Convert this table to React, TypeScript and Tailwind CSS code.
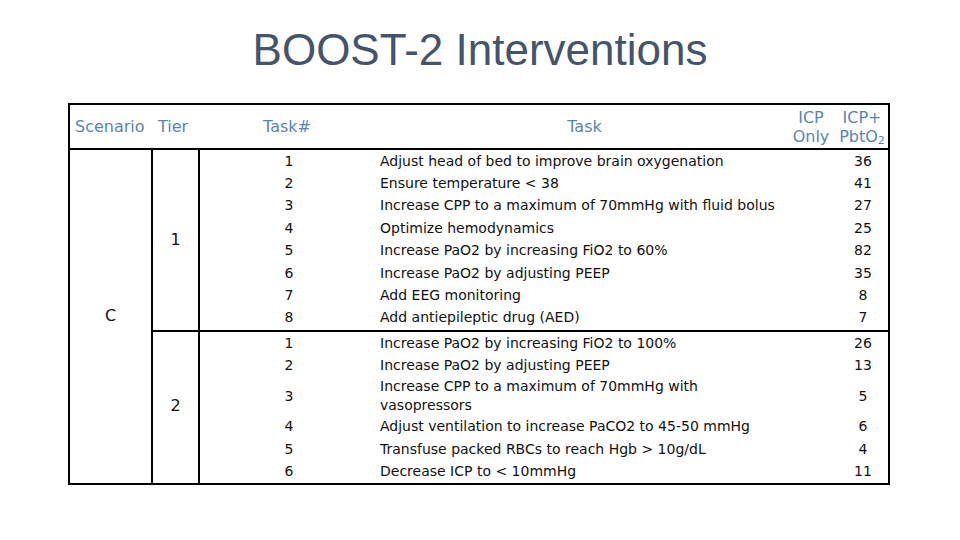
import React from 'react'

type Row = { n: string; task: React.ReactNode; count: string; tall?: boolean }

const tier1: Row[] = [
    { n: '1', task: 'Adjust head of bed to improve brain oxygenation', count: '36' },
    { n: '2', task: 'Ensure temperature < 38', count: '41' },
    { n: '3', task: 'Increase CPP to a maximum of 70mmHg with fluid bolus', count: '27' },
    { n: '4', task: 'Optimize hemodynamics', count: '25' },
    { n: '5', task: 'Increase PaO2 by increasing FiO2 to 60%', count: '82' },
    { n: '6', task: 'Increase PaO2 by adjusting PEEP', count: '35' },
    { n: '7', task: 'Add EEG monitoring', count: '8' },
    { n: '8', task: 'Add antiepileptic drug (AED)', count: '7' },
]

const tier2: Row[] = [
    { n: '1', task: 'Increase PaO2 by increasing FiO2 to 100%', count: '26' },
    { n: '2', task: 'Increase PaO2 by adjusting PEEP', count: '13' },
    {
        n: '3',
        task: (
            <>
                Increase CPP to a maximum of 70mmHg with
                <br />
                vasopressors
            </>
        ),
        count: '5',
        tall: true,
    },
    { n: '4', task: 'Adjust ventilation to increase PaCO2 to 45-50 mmHg', count: '6' },
    { n: '5', task: 'Transfuse packed RBCs to reach Hgb > 10g/dL', count: '4' },
    { n: '6', task: 'Decrease ICP to < 10mmHg', count: '11' },
]

function TaskRow({ row, h }: { row: Row; h: string }) {
    return (
        <div className={`flex items-center leading-[19px] ${h}`}>
            <div className="w-[178px] text-center">{row.n}</div>
            <div className="w-[460px] pl-[2px]">{row.task}</div>
            <div className="flex-1 text-center">{row.count}</div>
        </div>
    )
}

export default function App() {
    return (
        <div className="w-[960px] h-[540px] bg-white overflow-hidden">
            <h1 className="text-center text-[44px] leading-none text-[#44546a] pt-[28px] font-['Liberation_Sans',Arial,sans-serif]">
                BOOST-2 Interventions
            </h1>

            <div className="ml-[68px] mt-[31px] w-[822px] border-2 border-black text-[14px] text-[#111] font-['DejaVu_Sans',Tahoma,sans-serif]">
                {/* header */}
                <div className="flex items-center h-[45px] border-b-2 border-black text-[16px] text-[#5b84b1]">
                    <div className="pl-[5px] w-[88px]">Scenario</div>
                    <div className="w-[105px]">Tier</div>
                    <div className="w-[120px]">Task#</div>
                    <div className="w-[403px] text-center">Task</div>
                    <div className="w-[50px] text-center leading-[19px]">
                        ICP
                        <br />
                        Only
                    </div>
                    <div className="flex-1 text-center leading-[19px]">
                        ICP+
                        <br />
                        PbtO<sub className="text-[11px]">2</sub>
                    </div>
                </div>

                {/* body */}
                <div className="flex">
                    <div className="w-[83px] border-r-2 border-black flex items-center justify-center text-[16px]">C</div>
                    <div className="flex-1 flex flex-col">
                        <div className="flex h-[180px]">
                            <div className="w-[47px] border-r-2 border-black flex items-center justify-center text-[16px]">1</div>
                            <div className="flex-1 flex flex-col">
                                {tier1.map(r => (
                                    <TaskRow key={r.n} row={r} h="h-[22.4px]" />
                                ))}
                            </div>
                        </div>
                        <div className="flex border-t-2 border-black">
                            <div className="w-[47px] border-r-2 border-black flex items-center justify-center text-[16px] pb-[2px]">2</div>
                            <div className="flex-1 flex flex-col">
                                {tier2.map(r => (
                                    <TaskRow key={r.n} row={r} h={r.tall ? 'h-[39px]' : 'h-[22.4px]'} />
                                ))}
                            </div>
                        </div>
                    </div>
                </div>
            </div>
        </div>
    )
}
